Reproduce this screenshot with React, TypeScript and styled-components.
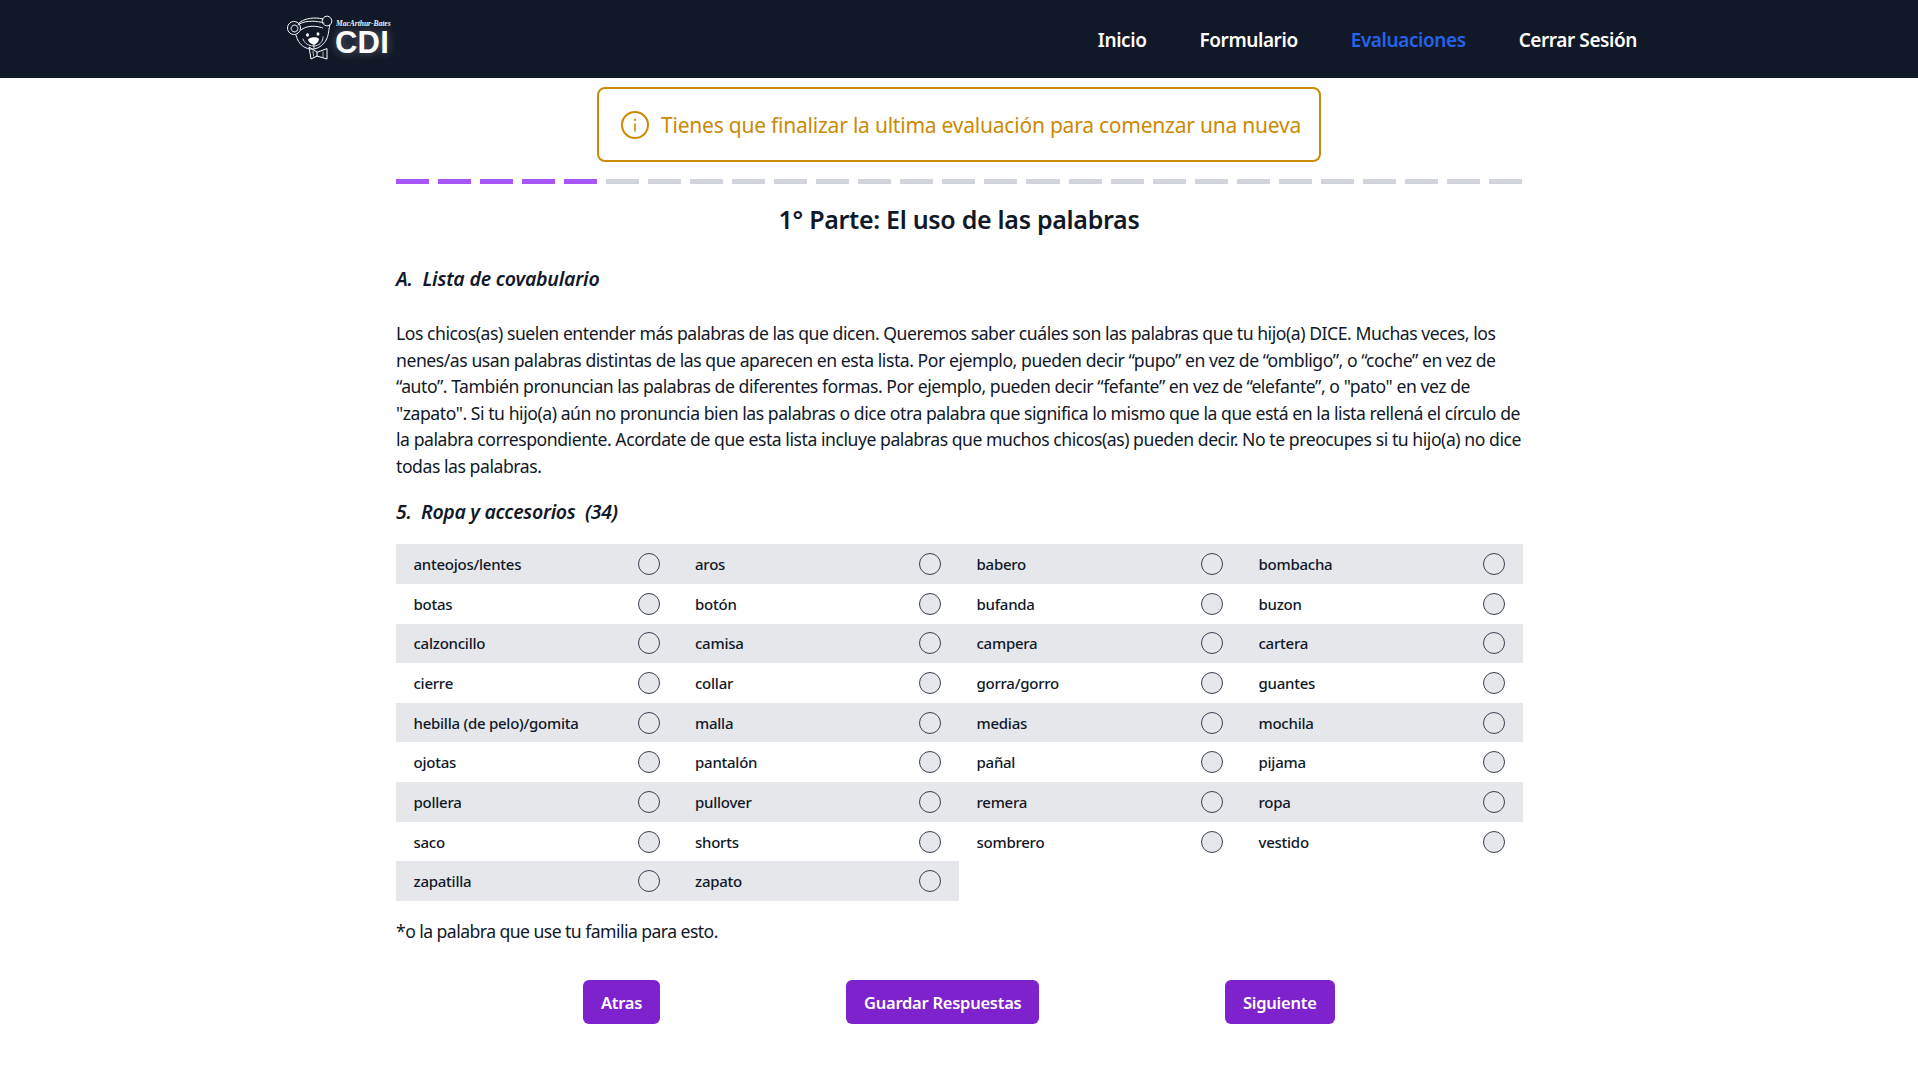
import React from "react";
import styled, { createGlobalStyle } from "styled-components";

const Global = createGlobalStyle`
  html, body { margin: 0; padding: 0; background: #fff; }
  body { font-family: "Noto Sans", "Open Sans", sans-serif; color: #111827; }
  * { box-sizing: border-box; }
`;

const Header = styled.header`
  height: 78px;
  background: #111827;
  display: flex;
  align-items: center;
  justify-content: space-between;
  padding: 0 281px 0 287px;
`;
const Logo = styled.div`
  display: flex;
  align-items: flex-start;
  height: 48px;
`;
const LogoText = styled.div`
  display: flex;
  flex-direction: column;
  align-items: flex-start;
  margin-left: -1px;
  padding-top: 5px;
`;
const LogoScript = styled.span`
  font-family: "Liberation Serif", serif;
  font-style: italic;
  font-weight: 700;
  font-size: 7.5px;
  line-height: 8px;
  margin-left: 1px;
  letter-spacing: 0;
  color: #f3f4f6;
  white-space: nowrap;
`;
const LogoCdi = styled.span`
  font-family: "Liberation Sans", sans-serif;
  font-weight: 700;
  font-size: 31px;
  line-height: 29px;
  letter-spacing: 0.2px;
  color: #fff;
  text-shadow: 0 0 10px rgba(255, 255, 255, 0.35);
`;
const Nav = styled.nav`
  display: flex;
  gap: 53px;
  margin-top: 2px;
`;
const NavLink = styled.a<{ $active?: boolean }>`
  font-size: 19px;
  font-weight: 600;
  letter-spacing: -0.42px;
  line-height: 24px;
  color: ${(p) => (p.$active ? "#2563eb" : "#fff")};
`;
const Page = styled.main`
  width: 1126px;
  margin: 0 auto;
`;
const AlertRow = styled.div`
  display: flex;
  justify-content: center;
  padding-top: 9px;
`;
const Alert = styled.div`
  width: 724px;
  height: 75px;
  border: 2px solid #ca8a04;
  border-radius: 8px;
  display: flex;
  align-items: center;
  gap: 12px;
  padding-left: 22px;
  color: #ca8a04;
  font-size: 21px;
  letter-spacing: -0.22px;
  white-space: nowrap;
`;
const Progress = styled.div`
  display: flex;
  gap: 9px;
  margin-top: 17px;
`;
const Segment = styled.div<{ $done?: boolean }>`
  flex: 1;
  height: 5px;
  background: ${(p) => (p.$done ? "#a855f7" : "#d1d5db")};
`;
const Title = styled.h1`
  margin: 19px 0 0;
  text-align: center;
  font-size: 25px;
  line-height: 32px;
  font-weight: 600;
  letter-spacing: -0.3px;
  color: #111827;
`;
const SectionTitle = styled.h2`
  margin: 30px 0 0;
  font-size: 19.5px;
  line-height: 28px;
  font-weight: 600;
  font-style: italic;
  letter-spacing: -0.2px;
  color: #111827;
`;
const Paragraph = styled.p`
  margin: 27px 0 0;
  font-size: 17.6px;
  line-height: 26.5px;
  letter-spacing: -0.45px;
  color: #111827;
  white-space: nowrap;
`;
const Category = styled(SectionTitle)`
  margin-top: 19px;
  letter-spacing: -0.32px;
`;
const Grid = styled.div`
  display: grid;
  width: 1127px;
  grid-template-columns: 281.5px 281.5px 282px 282px;
  grid-auto-rows: 39.67px;
  margin-top: 18.2px;
`;
const Cell = styled.label<{ $shaded: boolean }>`
  display: flex;
  align-items: center;
  justify-content: space-between;
  padding: 0 18px 0 17.5px;
  background: ${(p) => (p.$shaded ? "#e5e7eb" : "#fff")};
  font-size: 15px;
  font-weight: 500;
  letter-spacing: -0.25px;
  color: #111827;
`;
const Radio = styled.span`
  width: 22px;
  height: 22px;
  border-radius: 50%;
  border: 1px solid #374151;
  background: #e5e7eb;
`;
const Note = styled.p`
  margin: 17px 0 0;
  font-size: 17.6px;
  line-height: 26px;
  letter-spacing: -0.55px;
  color: #111827;
`;
const Actions = styled.div`
  display: grid;
  grid-template-columns: 263px 379px auto;
  justify-items: start;
  padding-left: 187px;
  margin-top: 36px;
  padding-bottom: 55px;
`;
const Button = styled.button`
  height: 44px;
  padding: 1px 18px 0;
  border: 0;
  border-radius: 6px;
  background: #7e22ce;
  color: #fff;
  font-family: inherit;
  font-size: 16.5px;
  font-weight: 600;
  letter-spacing: -0.25px;
`;

const BearLogo = () => (
  <svg width="49" height="48" viewBox="0 0 49 48" fill="none" stroke="#fff" strokeLinecap="round" strokeLinejoin="round">
    <g strokeWidth="1" strokeDasharray="2.2 0.7">
      <circle cx="7" cy="13" r="6.5" />
      <circle cx="7.5" cy="13.5" r="3.4" />
      <circle cx="40" cy="6" r="4.8" />
      <path d="M12 8 C18 3 28 2 36 4" />
      <path d="M11 10 C16 6 27 5 37 8" />
      <path d="M9 20 C11 28 16 33 23 34 C31 35 39 29 41 20 C42 16 42 12 43 10" />
      <path d="M14 15 C19 11 27 10 36 13" />
    </g>
    <path d="M16 24 C18 29 22 31 27 31 C32 31 36 27 36 22" strokeWidth="0.9" strokeDasharray="2 1" />
    <ellipse cx="20.5" cy="20" rx="1.5" ry="1.7" fill="#fff" stroke="none" />
    <ellipse cx="31" cy="19" rx="1.5" ry="1.7" fill="#fff" stroke="none" />
    <path d="M21 25 C21 22 31 21 32 24 C32 27 29 29 27 30 C25 29 22 28 21 25 Z" fill="#fff" stroke="none" />
    <path d="M27 30 L27 33" strokeWidth="0.9" />
    <path d="M30 37 L22 32 L24 44 L30 41 L40 44 L40 34 Z M30 37 L30 41" strokeWidth="1" />
    <path d="M26 36 L26.5 41 M36 37 L36 42" strokeWidth="0.7" />
  </svg>
);

const InfoIcon = () => (
  <svg width="28" height="28" viewBox="0 0 28 28" fill="none" stroke="#ca8a04" strokeWidth="2" strokeLinecap="round" style={{ flex: "none" }}>
    <circle cx="14" cy="14" r="13" />
    <path d="M14 13v7" strokeWidth="1.6" />
    <path d="M14 8.4v.6" strokeWidth="2" />
  </svg>
);

const ITEMS = [
  "anteojos/lentes", "aros", "babero", "bombacha",
  "botas", "botón", "bufanda", "buzon",
  "calzoncillo", "camisa", "campera", "cartera",
  "cierre", "collar", "gorra/gorro", "guantes",
  "hebilla (de pelo)/gomita", "malla", "medias", "mochila",
  "ojotas", "pantalón", "pañal", "pijama",
  "pollera", "pullover", "remera", "ropa",
  "saco", "shorts", "sombrero", "vestido",
  "zapatilla", "zapato",
];

export default function App() {
  return (
    <>
      <Global />
      <Header>
        <Logo>
          <BearLogo />
          <LogoText>
            <LogoScript>MacArthur-Bates</LogoScript>
            <LogoCdi>CDI</LogoCdi>
          </LogoText>
        </Logo>
        <Nav>
          <NavLink>Inicio</NavLink>
          <NavLink>Formulario</NavLink>
          <NavLink $active>Evaluaciones</NavLink>
          <NavLink>Cerrar Sesión</NavLink>
        </Nav>
      </Header>
      <Page>
        <AlertRow>
          <Alert>
            <InfoIcon />
            Tienes que finalizar la ultima evaluación para comenzar una nueva
          </Alert>
        </AlertRow>
        <Progress>
          {Array.from({ length: 27 }, (_, i) => (
            <Segment key={i} $done={i < 5} />
          ))}
        </Progress>
        <Title>1° Parte: El uso de las palabras</Title>
        <SectionTitle>A.&nbsp; Lista de covabulario</SectionTitle>
        <Paragraph>
          Los chicos(as) suelen entender más palabras de las que dicen. Queremos saber cuáles son las palabras que tu hijo(a) DICE. Muchas veces, los<br />
          nenes/as usan palabras distintas de las que aparecen en esta lista. Por ejemplo, pueden decir “pupo” en vez de “ombligo”, o “coche” en vez de<br />
          “auto”. También pronuncian las palabras de diferentes formas. Por ejemplo, pueden decir “fefante” en vez de “elefante”, o "pato" en vez de<br />
          "zapato". Si tu hijo(a) aún no pronuncia bien las palabras o dice otra palabra que significa lo mismo que la que está en la lista rellená el círculo de<br />
          la palabra correspondiente. Acordate de que esta lista incluye palabras que muchos chicos(as) pueden decir. No te preocupes si tu hijo(a) no dice<br />
          todas las palabras.
        </Paragraph>
        <Category>5.&nbsp; Ropa y accesorios&nbsp; (34)</Category>
        <Grid>
          {ITEMS.map((item, i) => (
            <Cell key={item} $shaded={Math.floor(i / 4) % 2 === 0}>
              {item}
              <Radio />
            </Cell>
          ))}
        </Grid>
        <Note>*o la palabra que use tu familia para esto.</Note>
        <Actions>
          <Button>Atras</Button>
          <Button>Guardar Respuestas</Button>
          <Button>Siguiente</Button>
        </Actions>
      </Page>
    </>
  );
}
